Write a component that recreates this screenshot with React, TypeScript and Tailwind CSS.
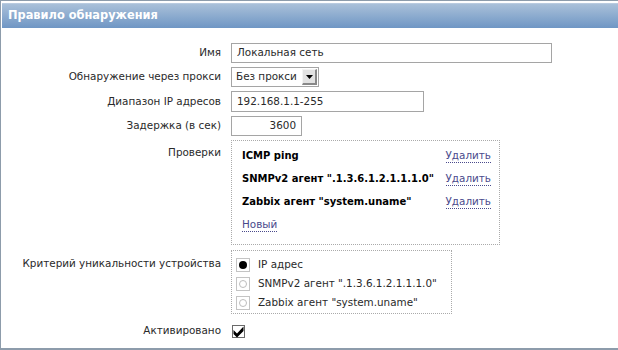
import React from "react";

const font = { fontFamily: '"DejaVu Sans", Verdana, sans-serif' };

function Row({
  label,
  children,
  className = "",
  labelClass = "items-center",
}: {
  label: string;
  children: React.ReactNode;
  className?: string;
  labelClass?: string;
}) {
  return (
    <div className={`flex gap-[10px] ${className}`}>
      <div className={`flex w-[220px] shrink-0 justify-end whitespace-nowrap ${labelClass}`}>
        {label}
      </div>
      <div className="flex items-center">{children}</div>
    </div>
  );
}

function Link({ children }: { children: React.ReactNode }) {
  return (
    <span className="border-b border-dotted border-[#4a4a8c] leading-[13px] text-[#4a4a8c]">
      {children}
    </span>
  );
}

function Radio({ checked }: { checked?: boolean }) {
  return (
    <svg width="14" height="14" viewBox="0 0 14 14" className="shrink-0">
      <rect x="0.5" y="0.5" width="13" height="13" fill="#fff" stroke="#c4c4c4" />
      {checked ? (
        <circle cx="7" cy="7" r="4" fill="#000" />
      ) : (
        <circle cx="7" cy="7" r="3.5" fill="#fff" stroke="#bdbdbd" />
      )}
    </svg>
  );
}

export default function App() {
  const checks = [
    "ICMP ping",
    'SNMPv2 агент ".1.3.6.1.2.1.1.1.0"',
    'Zabbix агент "system.uname"',
  ];

  return (
    <div
      style={font}
      className="h-[350px] w-[618px] overflow-hidden border-t border-b-2 border-l border-[#8d9cab] bg-white pt-[2px] text-[10.4px] text-[#2a2a2a]"
    >
      <div className="ml-[1px] flex h-[25px] items-center border-t border-[#b9cbe0] bg-gradient-to-b from-[#a9c0d9] to-[#6f96c4] pl-[6px] text-[11.4px] font-bold text-white">
        Правило обнаружения
      </div>

      <div className="flex flex-col gap-[4px] pt-[15px]">
        <Row label="Имя">
          <div className="flex h-[20px] w-[321px] items-center border border-[#a5a5a5] px-[5px]">
            Локальная сеть
          </div>
        </Row>

        <Row label="Обнаружение через прокси">
          <div className="flex h-[20px] w-[88px] items-center justify-between border border-[#a5a5a5] pl-[4px]">
            <span>Без прокси</span>
            <div className="mr-[1px] flex h-[16px] w-[15px] items-center justify-center border-t border-l border-b-2 border-r-2 border-t-[#f4f4f4] border-l-[#f4f4f4] border-b-[#888] border-r-[#888] bg-[#e2e2e2]">
              <svg width="7" height="4" viewBox="0 0 7 4">
                <path d="M0 0h7L3.5 4z" fill="#000" />
              </svg>
            </div>
          </div>
        </Row>

        <Row label="Диапазон IP адресов">
          <div className="flex h-[21px] w-[193px] items-center border border-[#a5a5a5] px-[5px]">
            192.168.1.1-255
          </div>
        </Row>

        <Row label="Задержка (в сек)">
          <div className="flex h-[20px] w-[71px] items-center justify-end border border-[#a5a5a5] px-[5px]">
            3600
          </div>
        </Row>

        <Row label="Проверки" labelClass="items-start pt-[5px]">
          <div className="flex w-[269px] flex-col border border-dotted border-[#aaa] pt-[3px] pb-[8px] pl-[10px] pr-[8px]">
            {checks.map((c) => (
              <div key={c} className="flex h-[23px] items-center justify-between whitespace-nowrap">
                <span className="text-[10px] font-bold text-black">{c}</span>
                <Link>Удалить</Link>
              </div>
            ))}
            <div className="flex h-[23px] items-center">
              <Link>Новый</Link>
            </div>
          </div>
        </Row>

        <Row
          label="Критерий уникальности устройства"
          className="mt-[1px]"
          labelClass="items-start pt-[6px]"
        >
          <div className="flex w-[221px] flex-col whitespace-nowrap border border-dotted border-[#aaa] pt-[4px] pb-[1px] pl-[4px]">
            <div className="flex h-[19px] items-center gap-[8px]">
              <Radio checked />
              <span>IP адрес</span>
            </div>
            <div className="flex h-[19px] items-center gap-[8px]">
              <Radio />
              <span>SNMPv2 агент ".1.3.6.1.2.1.1.1.0"</span>
            </div>
            <div className="flex h-[19px] items-center gap-[8px]">
              <Radio />
              <span>Zabbix агент "system.uname"</span>
            </div>
          </div>
        </Row>

        <Row label="Активировано" className="mt-[3px] h-[20px]">
          <svg width="13" height="13" viewBox="0 0 13 13" className="ml-[1px]">
            <rect x="0.5" y="0.5" width="12" height="12" fill="#fff" stroke="#6a6a6a" />
            <path d="M1.5 5l3.5 3.5 6.5-7v4.5l-6.5 6.5-3.5-3.5z" fill="#000" />
          </svg>
        </Row>
      </div>
    </div>
  );
}
